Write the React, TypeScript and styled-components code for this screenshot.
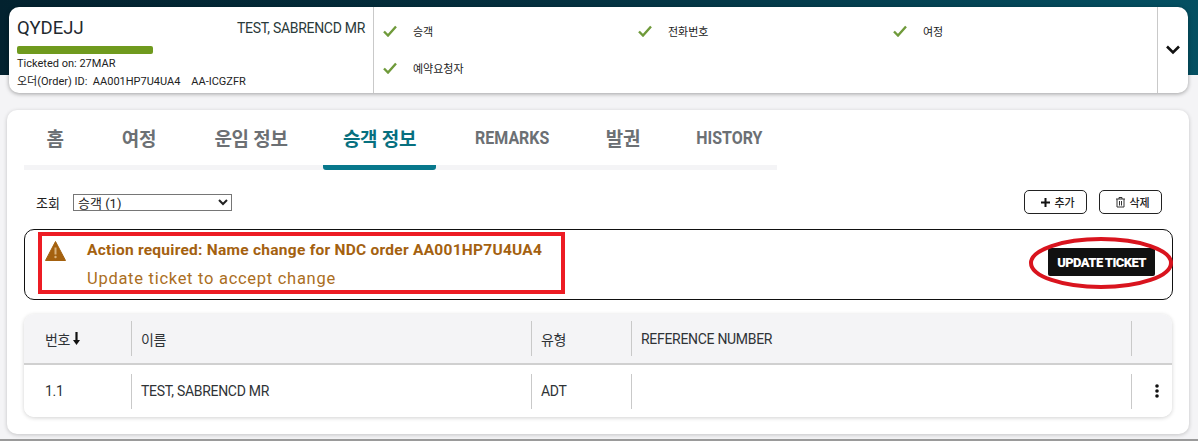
import React from "react";
import styled, { createGlobalStyle } from "styled-components";

const Global = createGlobalStyle`
  html, body { margin: 0; padding: 0; background: #f4f4f6; }
  body { font-family: Roboto, "Noto Sans CJK KR", sans-serif; color: #222; }
  * { box-sizing: border-box; }
`;
const Page = styled.div`
  position: relative; width: 1198px; height: 441px; overflow: hidden; background: #f4f4f6;
  border-bottom: 2px solid #9a9a9a;
`;
const Band = styled.div`
  height: 75px; background: linear-gradient(90deg, #03222f 0%, #04303f 45%, #045062 100%);
`;
const HeaderCard = styled.div`
  position: relative; margin: -68px 10px 0 9px; height: 86px; display: flex; background: #fff;
  border-radius: 10px; box-shadow: 0 1px 4px rgba(0,0,0,.35);
`;
const Summary = styled.div`
  width: 365px; border-right: 1px solid #c9c9c9; padding: 10px 8px 0 8px; display: flex; flex-direction: column;
`;
const SummaryTop = styled.div`
  display: flex; justify-content: space-between; align-items: center; height: 22px; color: #1f2a30;
`;
const Pnr = styled.span` font-size: 18.5px; `;
const PaxName = styled.span` font-size: 14px; letter-spacing: -0.3px; color: #2a3a3a; `;
const Progress = styled.div`
  width: 136px; height: 8px; margin: 7px 0 1px; background: #6f9a1e; border-radius: 2px;
`;
const Meta = styled.div`
  font-size: 11px; line-height: 18px; height: 18px; color: #222; white-space: pre;
`;
const Checks = styled.div`
  flex: 1; display: grid; grid-template-columns: repeat(3, 255px); grid-auto-rows: 37px; padding: 5px 0 0 9px;
`;
const CheckItem = styled.div`
  display: flex; align-items: center; gap: 16px; font-size: 11px; color: #222;
  font-family: "Noto Sans CJK KR", sans-serif; height: 37px;
`;
const Toggle = styled.div`
  width: 31px; border-left: 1px solid #c9c9c9; display: flex; align-items: center; justify-content: center;
`;
const Main = styled.div`
  position: relative; margin: 17px 9px 0 7px; height: 324px; background: #fff; border-radius: 10px;
  box-shadow: 0 1px 4px rgba(0,0,0,.2); padding: 0 16px 0 17px;
`;
const Tabs = styled.div`
  display: flex; gap: 13px; width: 753px; height: 60px; border-bottom: 5px solid #f4f4f6;
`;
const Tab = styled.div<{ $active?: boolean; $w: number }>`
  width: ${p => p.$w}px; height: 60px; flex: none; display: flex; align-items: center; justify-content: center;
  font-size: 19px; font-weight: 700;
  color: ${p => (p.$active ? "#07707f" : "#6c7074")};
  border-bottom: 5px solid ${p => (p.$active ? "#07788c" : "transparent")};
  border-radius: 0 0 3px 3px;
`;
const TabLabel = styled.span<{ $latin?: boolean }>`
  display: inline-block; white-space: nowrap;
  transform: ${p => (p.$latin ? "scaleX(0.84)" : "none")};
  letter-spacing: ${p => (p.$latin ? "0" : "-0.3px")};
`;
const FilterRow = styled.div`
  display: flex; align-items: center; height: 24px; margin-top: 20px;
`;
const FilterLabel = styled.span`
  margin-left: 12px; font-size: 13px; width: 37px; font-family: "Noto Sans CJK KR", sans-serif;
`;
const Select = styled.select`
  width: 159px; height: 17px; font-size: 13px; padding: 0; background: #fff; border: 1px solid #767676;
  font-family: Roboto, "Noto Sans CJK KR", sans-serif; color: #222; border-radius: 0;
`;
const RowActions = styled.div` margin-left: auto; margin-right: 11px; display: flex; gap: 12px; `;
const SmallButton = styled.button`
  width: 63px; height: 24px; display: flex; align-items: center; justify-content: center; gap: 3px; padding: 0 0 0 4px;
  background: #fff; border: 1px solid #222; border-radius: 5px; font-size: 11px; color: #222;
  font-family: "Noto Sans CJK KR", sans-serif; font-weight: 500;
`;
const Banner = styled.div`
  margin-top: 15px; height: 71px; width: 1149px; border: 1px solid #111; border-radius: 10px;
  display: flex; align-items: center; padding: 0 17px 0 20px;
`;
const WarnIcon = styled.svg` align-self: flex-start; margin-top: 11px; flex: none; `;
const BannerText = styled.div` margin: 10px 0 0 21px; flex: 1; align-self: flex-start; color: #a4610f; `;
const BannerTitle = styled.div` font-size: 15.5px; font-weight: 700; line-height: 20px; letter-spacing: 0.26px; `;
const BannerSub = styled.div` font-size: 16.5px; line-height: 20px; margin-top: 9px; letter-spacing: 0.72px; color: #ab6e1e; `;
const UpdateButton = styled.button`
  width: 107px; height: 28px; margin-top: -5px; background: #111; color: #fff; border: 0; border-radius: 2px; padding: 0;
  font-family: Roboto, sans-serif; font-size: 13px; font-weight: 900; letter-spacing: -0.6px;
`;
const Table = styled.div`
  margin-top: 14px; width: 1148px; height: 103px; background: #fff; border-radius: 10px; overflow: hidden;
  box-shadow: 0 1px 4px rgba(0,0,0,.18);
`;
const TRow = styled.div<{ $head?: boolean }>`
  display: grid; grid-template-columns: 108px 400px 100px 500px 40px; align-items: center;
  height: ${p => (p.$head ? "51px" : "52px")};
  background: ${p => (p.$head ? "#f4f4f6" : "#fff")};
  border-bottom: ${p => (p.$head ? "2px solid #d0d0d0" : "none")};
`;
const Cell = styled.div<{ $first?: boolean }>`
  height: 35px; display: flex; align-items: center; gap: 2px; font-size: 14px; color: #2f3336; letter-spacing: -0.3px;
  padding-left: ${p => (p.$first ? "21px" : "9px")};
  border-right: 1px solid #c9c9c9;
`;
const LastCell = styled.div` display: flex; justify-content: center; padding-left: 10px; `;
const Rect = styled.div`
  position: absolute; left: 38px; top: 232px; width: 527px; height: 62px; border: 4px solid #ed1c24; pointer-events: none;
`;
const Oval = styled.svg` position: absolute; left: 1028px; top: 236px; pointer-events: none; `;

const Tick = () => (
  <svg width="14" height="12" viewBox="0 0 14 12"><path d="M1 6.5 L5 10.5 L13 1.5" fill="none" stroke="#6f9a3a" strokeWidth="2.4" /></svg>
);

const checks = ["승객", "전화번호", "여정", "예약요청자"];
const tabs: [string, number, boolean][] = [
  ["홈", 62, false], ["여정", 80, false], ["운임 정보", 118, false], ["승객 정보", 113, false],
  ["REMARKS", 126, true], ["발권", 70, false], ["HISTORY", 116, true],
];

export default function App() {
  return (
    <Page>
      <Global />
      <Band />
      <HeaderCard>
        <Summary>
          <SummaryTop><Pnr>QYDEJJ</Pnr><PaxName>TEST, SABRENCD MR</PaxName></SummaryTop>
          <Progress />
          <Meta>Ticketed on: 27MAR</Meta>
          <Meta>{"오더(Order) ID:  AA001HP7U4UA4    AA-ICGZFR"}</Meta>
        </Summary>
        <Checks>
          {checks.map(c => <CheckItem key={c}><Tick />{c}</CheckItem>)}
        </Checks>
        <Toggle>
          <svg width="16" height="10" viewBox="0 0 16 10"><path d="M2 1.5 L8 7.5 L14 1.5" fill="none" stroke="#111" strokeWidth="2.6" /></svg>
        </Toggle>
      </HeaderCard>
      <Main>
        <Tabs>
          {tabs.map(([t, w, latin]) => (
            <Tab key={t} $w={w} $active={t === "승객 정보"}><TabLabel $latin={latin}>{t}</TabLabel></Tab>
          ))}
        </Tabs>
        <FilterRow>
          <FilterLabel>조회</FilterLabel>
          <Select defaultValue="a"><option value="a">승객 (1)</option></Select>
          <RowActions>
            <SmallButton>
              <svg width="11" height="11" viewBox="0 0 11 11"><path d="M5.5 1v9M1 5.5h9" stroke="#111" strokeWidth="2" /></svg>
              추가
            </SmallButton>
            <SmallButton>
              <svg width="11" height="12" viewBox="0 0 11 12" fill="none" stroke="#333" strokeWidth="1"><path d="M1 3h9M4 3V1.5h3V3M2 3v8h7V3M4.5 5v4.5M6.5 5v4.5" /></svg>
              삭제
            </SmallButton>
          </RowActions>
        </FilterRow>
        <Banner>
          <WarnIcon width="21" height="20" viewBox="0 0 21 20">
            <path d="M10.5 0.5 L20.5 19.5 L0.5 19.5 Z" fill="#a4610f" stroke="#a4610f" strokeLinejoin="round" />
            <path d="M10.5 6.5v7" stroke="#d9b27c" strokeWidth="2" />
            <circle cx="10.5" cy="16" r="1.2" fill="#d9b27c" />
          </WarnIcon>
          <BannerText>
            <BannerTitle>Action required: Name change for NDC order AA001HP7U4UA4</BannerTitle>
            <BannerSub>Update ticket to accept change</BannerSub>
          </BannerText>
          <UpdateButton>UPDATE TICKET</UpdateButton>
        </Banner>
        <Table>
          <TRow $head>
            <Cell $first>번호
              <svg width="9" height="13" viewBox="0 0 9 13"><path d="M4.5 0v9" stroke="#111" strokeWidth="2.2" /><path d="M1 8h7l-3.5 5z" fill="#111" /></svg>
            </Cell>
            <Cell>이름</Cell>
            <Cell>유형</Cell>
            <Cell>REFERENCE NUMBER</Cell>
            <LastCell />
          </TRow>
          <TRow>
            <Cell $first>1.1</Cell>
            <Cell>TEST, SABRENCD MR</Cell>
            <Cell>ADT</Cell>
            <Cell />
            <LastCell>
              <svg width="6" height="14" viewBox="0 0 6 14" fill="#111"><circle cx="3" cy="2" r="1.8" /><circle cx="3" cy="7" r="1.8" /><circle cx="3" cy="12" r="1.8" /></svg>
            </LastCell>
          </TRow>
        </Table>
      </Main>
      <Rect />
      <Oval width="146" height="54" viewBox="0 0 146 54"><ellipse cx="73" cy="27" rx="70" ry="24" fill="none" stroke="#d9141e" strokeWidth="4" /></Oval>
    </Page>
  );
}
